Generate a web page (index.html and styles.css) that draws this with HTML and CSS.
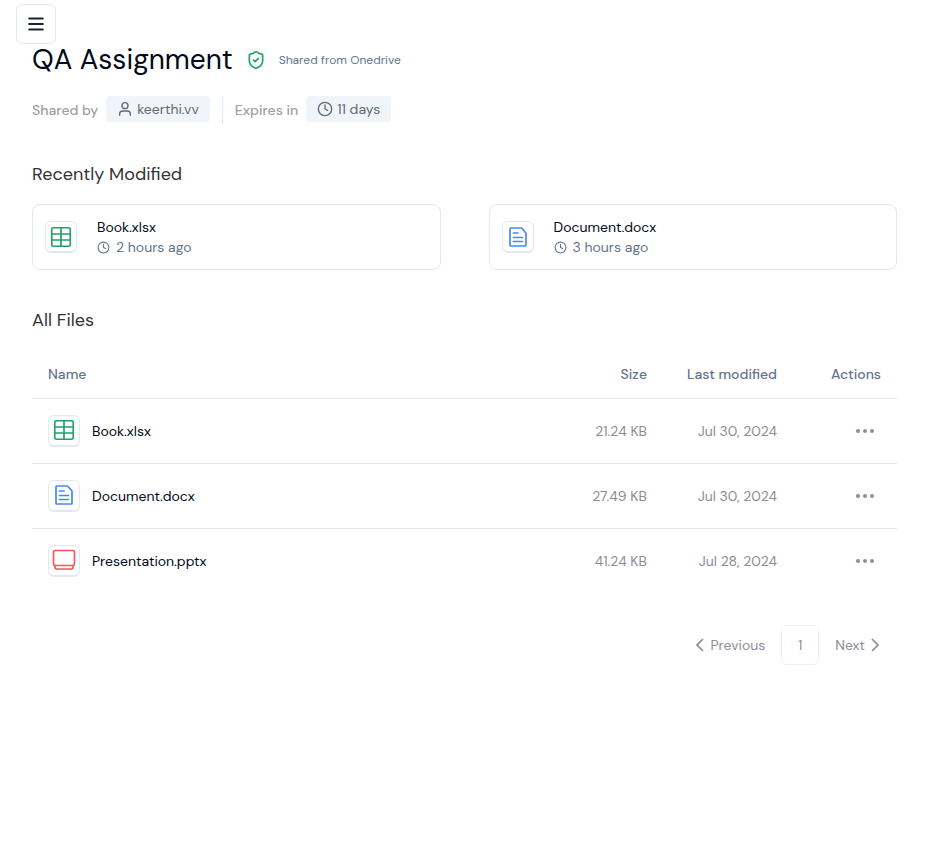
FILE: index.html
```
<!DOCTYPE html>
<html lang="en">
<head>
<meta charset="utf-8">
<meta name="viewport" content="width=device-width, initial-scale=1">
<title>QA Assignment</title>
<link rel="stylesheet" href="styles.css">
</head>
<body>
<svg class="sprite" aria-hidden="true">
  <symbol id="sheet" viewBox="0 0 24 24"><rect x="2.750" y="2.750" width="18.500" height="18.500" rx="1.5"/><path d="M3 9h18M3 15h18M12 3v18"/></symbol>
  <symbol id="doc" viewBox="0 0 24 24"><path d="M5 3h10.500L20 8v12a1 1 0 0 1-1 1H5a1 1 0 0 1-1-1V4a1 1 0 0 1 1-1zM7.500 8H12M7.500 12.500h9M7.500 16.500h9"/></symbol>
  <symbol id="slides" viewBox="0 0 24 24"><rect x="1.500" y="2.500" width="21" height="15" rx="1.500"/><path d="M3 17.500v1.500a2 2 0 0 0 2 2h14a2 2 0 0 0 2-2v-1.500"/></symbol>
  <symbol id="clock" viewBox="0 0 24 24"><circle cx="12" cy="12" r="10"/><path d="M12 6v6l4 2"/></symbol>
  <symbol id="dots" viewBox="0 0 20 20"><circle cx="3" cy="10" r="2"/><circle cx="10" cy="10" r="2"/><circle cx="17" cy="10" r="2"/></symbol>
</svg>
<button class="menu" type="button" aria-label="Open menu"><svg class="icon menu-icon" viewBox="0 0 24 24"><path d="M4.500 6h15M4.500 12h15M4.500 18h15"/></svg></button>
<main class="page">
  <header>
    <div class="title-row">
      <h1>QA Assignment</h1>
      <svg class="icon shield" viewBox="0 0 24 24"><path d="M20 13c0 5-3.500 7.500-7.660 8.950a1 1 0 0 1-.67-.01C7.500 20.500 4 18 4 13V6a1 1 0 0 1 1-1c2 0 4.500-1.200 6.240-2.720a1.170 1.170 0 0 1 1.520 0C14.510 3.810 17 5 19 5a1 1 0 0 1 1 1z"/><path d="m9 12 2 2 4-4"/></svg>
      <span class="source">Shared from Onedrive</span>
    </div>
    <div class="meta">
      <span class="meta-label">Shared by</span>
      <span class="badge"><svg class="icon badge-icon" viewBox="0 0 24 24"><circle cx="12" cy="7" r="4.500"/><path d="M4 21.500v-2a4.500 4.500 0 0 1 4.500-4.500h7a4.500 4.500 0 0 1 4.500 4.500v2"/></svg>keerthi.vv</span>
      <span class="divider"></span>
      <span class="meta-label">Expires in</span>
      <span class="badge"><svg class="icon badge-icon"><use href="#clock"/></svg>11 days</span>
    </div>
  </header>
  <section>
    <h2>Recently Modified</h2>
    <div class="cards">
      <article class="card">
        <span class="file-box green"><svg class="icon file-icon"><use href="#sheet"/></svg></span>
        <div><div class="file-name">Book.xlsx</div><div class="ago"><svg class="icon ago-icon"><use href="#clock"/></svg>2 hours ago</div></div>
      </article>
      <article class="card">
        <span class="file-box blue"><svg class="icon file-icon"><use href="#doc"/></svg></span>
        <div><div class="file-name">Document.docx</div><div class="ago"><svg class="icon ago-icon"><use href="#clock"/></svg>3 hours ago</div></div>
      </article>
    </div>
  </section>
  <section>
    <h2>All Files</h2>
    <table>
      <thead><tr><th class="name-col">Name</th><th>Size</th><th class="date-col">Last modified</th><th class="action-col">Actions</th></tr></thead>
      <tbody>
        <tr><td><div class="file"><span class="file-box green"><svg class="icon file-icon"><use href="#sheet"/></svg></span>Book.xlsx</div></td><td>21.24 KB</td><td>Jul 30, 2024</td><td><button class="more" type="button" aria-label="Actions for Book.xlsx"><svg class="dots"><use href="#dots"/></svg></button></td></tr>
        <tr><td><div class="file"><span class="file-box blue"><svg class="icon file-icon"><use href="#doc"/></svg></span>Document.docx</div></td><td>27.49 KB</td><td>Jul 30, 2024</td><td><button class="more" type="button" aria-label="Actions for Document.docx"><svg class="dots"><use href="#dots"/></svg></button></td></tr>
        <tr><td><div class="file"><span class="file-box red"><svg class="icon file-icon"><use href="#slides"/></svg></span>Presentation.pptx</div></td><td>41.24 KB</td><td>Jul 28, 2024</td><td><button class="more" type="button" aria-label="Actions for Presentation.pptx"><svg class="dots"><use href="#dots"/></svg></button></td></tr>
      </tbody>
    </table>
  </section>
  <nav class="pager" aria-label="Pagination">
    <button type="button"><svg class="icon chevron" viewBox="0 0 8 14"><path d="M7 1 1 7l6 6"/></svg>Previous</button>
    <button class="current" type="button" aria-current="page">1</button>
    <button type="button">Next<svg class="icon chevron" viewBox="0 0 8 14"><path d="m1 1 6 6-6 6"/></svg></button>
  </nav>
</main>
</body>
</html>
```
FILE: styles.css
```
* { box-sizing: border-box; }
body {
  margin: 0;
  background: #fff;
  color: #020817;
  font: 14px/20px "DM Sans", Inter, sans-serif;
}
h1, h2 { margin: 0; font-weight: 400; }
h1 { font-size: 28px; line-height: 36px; }
h2 { color: #333; font-size: 18px; line-height: 28px; }
button {
  padding: 0;
  border: 0;
  background: none;
  color: inherit;
  font: inherit;
  cursor: pointer;
}
.sprite { position: absolute; width: 0; height: 0; }
.icon {
  flex: none;
  fill: none;
  stroke: currentColor;
  stroke-width: 2;
  stroke-linecap: round;
  stroke-linejoin: round;
}
.menu {
  position: absolute;
  top: 4px;
  left: 16px;
  display: grid;
  place-items: center;
  width: 40px;
  height: 40px;
  border: 1px solid #e2e8f0;
  border-radius: 6px;
  background: #fff;
  color: #1e2030;
}
.menu-icon { width: 22px; height: 22px; }
.page { padding: 42px 32px 32px; }
.title-row { display: flex; align-items: center; gap: 13px; }
.shield { width: 20px; height: 20px; color: #22a06b; }
.source { color: #64748b; font-size: 12px; line-height: 16px; }
.meta { display: flex; align-items: center; gap: 8px; height: 28px; margin-top: 18px; }
.meta-label { color: #a0a0a0; font-weight: 500; }
.badge {
  display: flex;
  align-self: flex-start;
  align-items: center;
  gap: 4px;
  height: 26px;
  padding: 0 11px;
  border-radius: 4px;
  background: #f1f5f9;
  color: #626878;
}
.badge-icon { width: 16px; height: 16px; }
.divider { width: 1px; height: 28px; margin: 0 4px; background: #e2e8f0; }
section { margin-top: 36px; }
.cards { display: grid; grid-template-columns: 1fr 1fr; gap: 48px; margin-top: 16px; }
.card {
  display: flex;
  align-items: center;
  gap: 20px;
  padding: 12px;
  border: 1px solid #e2e8f0;
  border-radius: 8px;
}
.file-box {
  display: grid;
  flex: none;
  place-items: center;
  width: 32px;
  height: 32px;
  border: 1px solid #e2e8f0;
  border-bottom-width: 2px;
  border-radius: 6px;
}
.file-icon { width: 24px; height: 24px; stroke-width: 1.7; }
.green { color: #22a06b; }
.blue { color: #4688fa; }
.red { color: #e85c5c; }
.ago { display: flex; align-items: center; gap: 6px; color: #64748b; }
.ago-icon { width: 13px; height: 13px; }
table { width: 100%; margin-top: 16px; border-collapse: collapse; }
th { height: 48px; padding: 0 16px; color: #64748b; font-weight: 500; text-align: right; }
td { height: 65px; padding: 0 16px; color: #8b8d98; text-align: right; }
thead tr, tbody tr:not(:last-child) { border-bottom: 1px solid #e2e8f0; }
.name-col { text-align: left; }
.date-col { width: 130px; }
.action-col { width: 104px; }
.file { display: flex; align-items: center; gap: 12px; color: #020817; }
.more { display: inline-flex; align-items: center; width: 32px; height: 32px; justify-content: center; vertical-align: middle; }
.dots { width: 20px; height: 20px; fill: #8b8d98; }
.pager { display: flex; align-items: center; justify-content: flex-end; gap: 16px; margin-top: 32px; padding-right: 18px; color: #8b8d98; }
.pager button { display: flex; align-items: center; justify-content: center; gap: 6px; height: 40px; }
.pager .current { width: 38px; border: 1px solid #f0f1f6; border-radius: 6px; }
.chevron { width: 8px; height: 14px; stroke-width: 1.7; stroke-linecap: butt; stroke-linejoin: miter; }
```
